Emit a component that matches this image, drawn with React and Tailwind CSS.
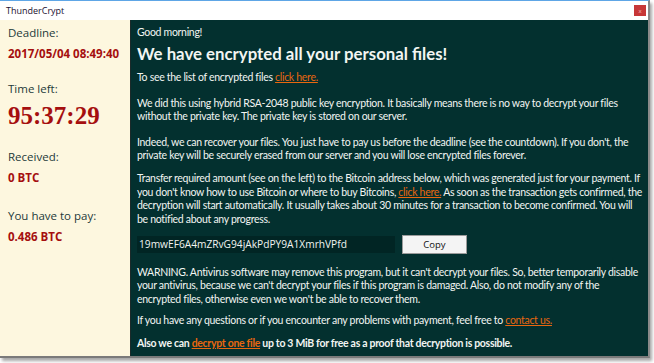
import React from "react";

// Left info panel
const InfoBlock = ({ label, value, big, className }) => (
  <div className={`flex flex-col ${className || ""}`}>
    <p className="text-[11.5px] leading-[14px] text-[#1d3a3a]">{label}</p>
    {big ? (
      <p className="mt-[7px] text-[25px] leading-[26px] font-bold text-[#a50f0f] [font-family:'Liberation_Serif',serif]">
        {value}
      </p>
    ) : (
      <p className="mt-[7px] text-[11.5px] leading-[14px] font-bold text-[#a50f0f]">
        {value}
      </p>
    )}
  </div>
);

const Link = ({ children }) => (
  <span className="text-[#e8670f] underline">{children}</span>
);

const App = () => {
  return (
    <div className="w-[654px] h-[363px] bg-white overflow-hidden [font-family:'Open_Sans',sans-serif]">
      <div className="w-[650px] h-[358px] flex flex-col border-t border-t-[#5ea6e6] border-r-[2px] border-r-[#8a8a8a] border-b-[2px] border-b-[#7a7a7a] shadow-[2px_3px_3px_rgba(0,0,0,0.35)]">
        {/* Title bar */}
        <div className="h-[19px] flex items-center justify-between bg-white pl-[6px] pr-[2px]">
          <span className="text-[9px] text-[#1a1030]">ThunderCrypt</span>
          <div className="w-[12px] h-[11px] bg-[#c73737] flex items-center justify-center">
            <span className="text-[6px] leading-none text-[#f4c0c0]">x</span>
          </div>
        </div>

        <div className="flex flex-1 min-h-0">
          {/* Left */}
          <div className="w-[130px] bg-[#fdf7df] pl-[8px] pt-[6px] flex flex-col">
            <InfoBlock label="Deadline:" value="2017/05/04 08:49:40" />
            <InfoBlock className="mt-[21px]" label="Time left:" value="95:37:29" big />
            <InfoBlock className="mt-[21px]" label="Received:" value="0 BTC" />
            <InfoBlock className="mt-[24px]" label="You have to pay:" value="0.486 BTC" />
          </div>

          {/* Right */}
          <div className="flex-1 bg-[#03302f] border-l border-[#1c2a2a] pl-[6px] pr-[1px] pt-[6px] text-[10.5px] leading-[13.4px] text-[#f2f5f2] tracking-[-0.3px] [font-family:'Lato',sans-serif]">
            <p>Good morning!</p>
            <h1 className="mt-[5px] text-[16.8px] leading-[20px] font-bold tracking-[0px]">
              We have encrypted all your personal files!
            </h1>
            <p className="mt-[7px]">
              To see the list of encrypted files <Link>click here.</Link>
            </p>
            <p className="mt-[12px]">
              We did this using hybrid RSA-2048 public key encryption. It basically means there is no way to decrypt your files
              <br />
              without the private key. The private key is stored on our server.
            </p>
            <p className="mt-[12px]">
              Indeed, we can recover your files. You just have to pay us before the deadline (see the countdown). If you don't, the
              <br />
              private key will be securely erased from our server and you will lose encrypted files forever.
            </p>
            <p className="mt-[10px]">
              Transfer required amount (see on the left) to the Bitcoin address below, which was generated just for your payment. If
              <br />
              you don't know how to use Bitcoin or where to buy Bitcoins, <Link>click here.</Link> As soon as the transaction gets confirmed, the
              <br />
              decryption will start automatically. It usually takes about 30 minutes for a transaction to become confirmed. You will
              <br />
              be notified about any progress.
            </p>
            <div className="mt-[9px] flex items-center gap-[7px]">
              <div className="w-[258px] h-[17px] bg-[#012524] flex items-center pl-[2px] [font-family:'Open_Sans',sans-serif] text-[10.2px] tracking-[0px]">
                <span>19mwEF6A4mZRvG94jAkPdPY9A1XmrhVPfd</span>
              </div>
              <button className="w-[65px] h-[19px] bg-[#f4f4f4] border border-[#9a9a9a] text-[#111] text-[9.5px] leading-none tracking-[0px] [font-family:'Open_Sans',sans-serif]">
                Copy
              </button>
            </div>
            <p className="mt-[12px]">
              WARNING. Antivirus software may remove this program, but it can't decrypt your files. So, better temporarily disable
              <br />
              your antivirus, because we can't decrypt your files if this program is damaged. Also, do not modify any of the
              <br />
              encrypted files, otherwise even we won't be able to recover them.
            </p>
            <p className="mt-[8px]">
              If you have any questions or if you encounter any problems with payment, feel free to <Link>contact us.</Link>
            </p>
            <p className="mt-[9px] font-bold">
              Also we can <Link>decrypt one file</Link> up to 3 MiB for free as a proof that decryption is possible.
            </p>
          </div>
        </div>
      </div>
    </div>
  );
};

export default App;
